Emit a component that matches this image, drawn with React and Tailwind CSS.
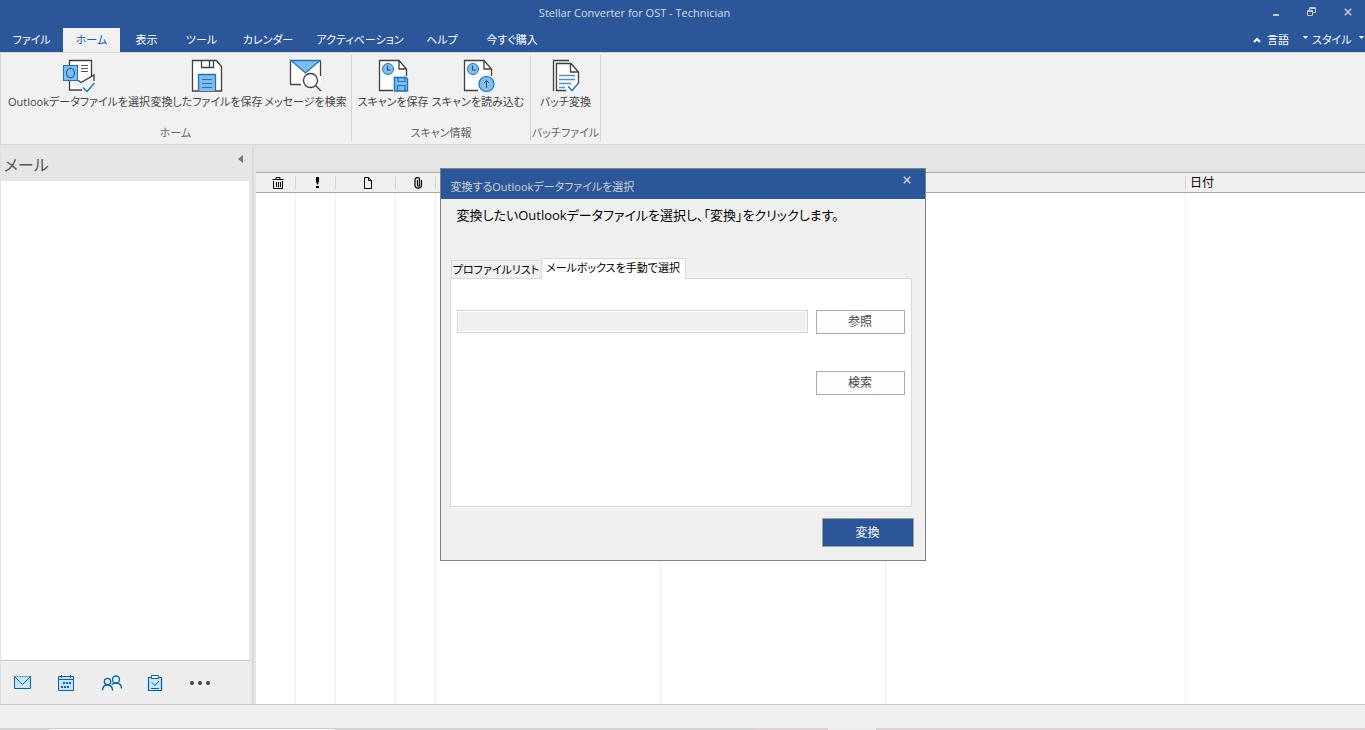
import { useState } from "react";

const MENU_TABS = [
    { label: "ファイル", width: "w-[63px]" },
    { label: "ホーム", width: "w-[57px]" },
    { label: "表示", width: "w-[53px]" },
    { label: "ツール", width: "w-[57px]" },
    { label: "カレンダー", width: "w-[76px]" },
    { label: "アクティベーション", width: "w-[108px]" },
    { label: "ヘルプ", width: "w-[56px]" },
    { label: "今すぐ購入", width: "w-[84px]" }
];

// Ribbon icons
const DataFileIcon = () => (
    <svg width="34" height="34" viewBox="0 0 34 34" fill="none">
        <path d="M7.500 5.500v-4h22V17L18 23l-2-2.500M7.500 22.500v8.500H20" fill="#fff" />
        <path d="M7.500 6V1.500h22V17M7.500 22v9H20" stroke="#404040" strokeWidth="1.3" />
        <path d="M15.500 21l3.500 2.500L32 16v6" stroke="#404040" strokeWidth="1.3" />
        <path d="M19 6.500h7M19 9.500h7M19 12.500h7" stroke="#555" />
        <rect x="1.500" y="6.500" width="14" height="15" fill="#83bdec" stroke="#1a73bd" />
        <ellipse cx="8.500" cy="14" rx="4" ry="4.800" stroke="#1a73bd" strokeWidth="1.4" />
        <path d="M21 28.500l4 4 7.500-8.500" stroke="#1a73bd" strokeWidth="1.4" />
    </svg>
);

const SaveFileIcon = () => (
    <svg width="34" height="34" viewBox="0 0 34 34" fill="none">
        <path d="M2.500 1.500h24l5 6v24.500h-29z" fill="#fff" stroke="#404040" strokeWidth="1.3" />
        <path d="M11.500 1.500v7h12v-7M19.500 2v6" stroke="#404040" strokeWidth="1.3" />
        <path d="M8.500 32V15.500h17V32" fill="#83bdec" stroke="#1a73bd" strokeWidth="1.3" />
        <path d="M12 20.500h10M12 24.500h10M12 28.500h10" stroke="#1a73bd" />
    </svg>
);

const SearchMailIcon = () => (
    <svg width="34" height="34" viewBox="0 0 34 34" fill="none">
        <path d="M1.500 1.500h30v24.500h-30z" fill="#fff" />
        <path d="M12 25.500H1.500v-24M31.500 2v15" stroke="#404040" strokeWidth="1.3" />
        <path d="M2 1.500h29L16.500 14z" fill="#83bdec" stroke="#1a73bd" strokeWidth="1.3" />
        <circle cx="21.500" cy="21.500" r="8.500" fill="#f1f1f1" />
        <circle cx="21.500" cy="21.500" r="7" fill="#fff" stroke="#404040" strokeWidth="1.3" />
        <path d="M26.500 26.500l5.500 5.500" stroke="#404040" strokeWidth="1.3" />
    </svg>
);

const ScanPage = () => (
    <>
        <path d="M3.500 1.500h20l7 8V32h-27z" fill="#fff" />
        <path d="M17 31.500H3.500v-30H23l7.500 8.500v7M23 1.500V10h7.500" stroke="#404040" strokeWidth="1.3" />
        <circle cx="12" cy="10" r="5.500" fill="#83bdec" stroke="#1a73bd" />
        <path d="M11.500 6.500v4.500H15" stroke="#0f5c9e" strokeWidth="1.2" />
    </>
);

const ScanSaveIcon = () => (
    <svg width="34" height="34" viewBox="0 0 34 34" fill="none">
        <ScanPage />
        <path d="M17 17h17v17H17z" fill="#f1f1f1" />
        <path d="M18.500 18.500h11.500l1.500 1.500v12h-13z" fill="#83bdec" stroke="#1a73bd" strokeWidth="1.4" />
        <path d="M22 18.500v4h7v-4M21.500 32v-5.500h7.500V32" stroke="#1a73bd" strokeWidth="1.2" />
    </svg>
);

const ScanLoadIcon = () => (
    <svg width="34" height="34" viewBox="0 0 34 34" fill="none">
        <ScanPage />
        <circle cx="25.500" cy="25" r="8.500" fill="#f1f1f1" />
        <circle cx="25.500" cy="25" r="7.500" fill="#83bdec" stroke="#1a73bd" strokeWidth="1.2" />
        <path d="M25.500 29v-7.500M23 24l2.500-2.500L28 24" stroke="#0f5c9e" />
    </svg>
);

const BatchIcon = () => (
    <svg width="34" height="34" viewBox="0 0 34 34" fill="none">
        <path d="M4.500 32V1.500H20" stroke="#404040" strokeWidth="1.3" />
        <path d="M7.500 32V4.500h15l7 8V25L21 32z" fill="#fff" />
        <path d="M17 31.500H7.500v-27H22l7.500 8.500v11M21.500 4.500V13h8" stroke="#404040" strokeWidth="1.3" />
        <path d="M10 16.500h16M10 20.500h16M10 24.500h12M10 28.500h6" stroke="#4d94d1" strokeWidth="1.3" />
        <path d="M19 27.500l4 4 7-8" stroke="#1a73bd" strokeWidth="1.4" />
    </svg>
);

const RIBBON_GROUPS = [
    {
        title: "ホーム",
        className: "w-[351px] pl-2",
        items: [
            { label: "Outlookデータファイルを選択", icon: DataFileIcon, width: "w-[142px]" },
            { label: "変換したファイルを保存", icon: SaveFileIcon, width: "w-[113px]" },
            { label: "メッセージを検索", icon: SearchMailIcon, width: "w-[85px]" }
        ]
    },
    {
        title: "スキャン情報",
        className: "w-[178px] pl-1",
        items: [
            { label: "スキャンを保存", icon: ScanSaveIcon, width: "w-[74px]" },
            { label: "スキャンを読み込む", icon: ScanLoadIcon, width: "w-[96px]" }
        ]
    },
    {
        title: "バッチファイル",
        className: "w-[69px]",
        items: [{ label: "バッチ変換", icon: BatchIcon, width: "w-[69px]" }]
    }
];

const CloseIcon = ({ size = 10 }) => (
    <svg width={size} height={size} viewBox="0 0 8 8" stroke="currentColor" strokeWidth="1.6">
        <path d="M.8.8l6.400 6.400M7.200.8L.8 7.200" />
    </svg>
);

function TitleBar() {
    return (
        <div className="relative flex h-7 items-center justify-center pb-[2px] text-[#d5deeb]">
            <h1 className="pr-24">Stellar Converter for OST - Technician</h1>
            <div className="absolute top-0 right-0 flex h-6">
                <button aria-label="最小化" className="flex w-9 items-center justify-center">
                    <svg width="8" height="8"><path d="M1 6h6v2H1z" fill="#c8c8c8" /></svg>
                </button>
                <button aria-label="元に戻す" className="flex w-9 items-center justify-center">
                    <svg width="10" height="10" fill="none" stroke="#c8c8c8">
                        <path d="M2.500 3V.5h6v5H6M2.500 1.500h6M.5 3.500h5v5h-5zM.5 4.500h5" />
                    </svg>
                </button>
                <button aria-label="閉じる" className="flex w-[35px] items-center justify-center text-[#c8c8c8]">
                    <CloseIcon size={8} />
                </button>
            </div>
        </div>
    );
}

function MenuBar() {
    return (
        <div className="flex h-6 justify-between text-white">
            <nav className="flex">
                {MENU_TABS.map((tab) => (
                    <button
                        key={tab.label}
                        className={`${tab.width} whitespace-nowrap ${tab.label === "ホーム" ? "bg-[#f1f1f1] text-[#0f62b8]" : ""}`}
                    >
                        {tab.label}
                    </button>
                ))}
            </nav>
            <div className="flex items-center">
                <button aria-label="リボンを折りたたむ" className="flex w-5 justify-center">
                    <svg width="8" height="6" fill="none" stroke="#fff" strokeWidth="2"><path d="M1 5l3-3 3 3" /></svg>
                </button>
                <button className="flex w-[45px] items-center justify-between whitespace-nowrap">
                    言語
                    <svg width="5" height="4" fill="#fff" className="mr-1 mb-1"><path d="M0 0h5L2.500 3z" /></svg>
                </button>
                <button className="flex w-[53px] items-center justify-between whitespace-nowrap">
                    スタイル
                    <svg width="5" height="4" fill="#fff" className="mr-px mb-1"><path d="M0 0h5L2.500 3z" /></svg>
                </button>
            </div>
        </div>
    );
}

function Ribbon() {
    return (
        <div className="flex h-[93px] border-t border-b border-l border-[#d4d4d4] bg-[#f1f1f1] pt-[2px] pb-[3px] text-[#444]">
            {RIBBON_GROUPS.map((group) => (
                <section key={group.title} className="flex flex-col justify-between border-r border-[#d4d4d4] first:-ml-px">
                    <div className={`flex ${group.className}`}>
                        {group.items.map(({ label, icon: Icon, width }) => (
                            <button key={label} className={`${width} flex flex-col items-center pt-1 whitespace-nowrap`}>
                                <Icon />
                                <span className="pt-px leading-4">{label}</span>
                            </button>
                        ))}
                    </div>
                    <h2 className="text-center leading-4 text-[#666]">{group.title}</h2>
                </section>
            ))}
        </div>
    );
}

function Sidebar() {
    return (
        <aside className="flex w-[250px] shrink-0 flex-col border-l border-[#e0e0e0] bg-[#e6e6e6]">
            <div className="flex h-9 justify-between pl-[3px]">
                <h2 className="pt-2 text-base text-[#555]">メール</h2>
                <button aria-label="折りたたむ" className="mt-2 mr-[7px] h-3">
                    <svg width="5" height="8" fill="#777"><path d="M5 0v8L0 4z" /></svg>
                </button>
            </div>
            <div className="mr-px flex-1 bg-white" />
            <nav className="flex h-11 items-center border-t border-[#c8c8c8] bg-[#eee] pl-3 text-[#0063b1]">
                <button aria-label="メール" className="w-11">
                    <svg width="20" height="18" fill="#cce4f7" stroke="currentColor">
                        <path d="M1.500 2.500h16v12h-16z" />
                        <path d="M1.500 2.500l8 8 8-8" />
                    </svg>
                </button>
                <button aria-label="カレンダー" className="w-11">
                    <svg width="20" height="18" fill="#cce4f7" stroke="currentColor">
                        <path d="M1.500 2.500h15v14h-15zM1.500 5.500h15M4.500 1v3M13.500 1v3" />
                        <path d="M6 9h2m1 0h2m1 0h2M4 13h2m1 0h2m1 0h2" strokeWidth="2" />
                    </svg>
                </button>
                <button aria-label="連絡先" className="w-[45px]">
                    <svg width="22" height="18" fill="none" stroke="currentColor" strokeWidth="1.300">
                        <circle cx="6.500" cy="7.500" r="3.200" />
                        <circle cx="15" cy="5.500" r="3.500" />
                        <path d="M1.500 16.500c0-3.500 2-5.500 5-5.500s5 2 5 5.500M11 10.500c1-1 2.500-1.500 4-1.500 3.500 0 5.500 2 5.500 5.500" />
                    </svg>
                </button>
                <button aria-label="タスク" className="w-[42px]">
                    <svg width="18" height="18" fill="#cce4f7" stroke="currentColor">
                        <path d="M2.500 3.500h13v13h-13z" strokeWidth="1.200" />
                        <path d="M5.500 1.500h7v3h-7z" fill="#fff" />
                        <path d="M6 8.500l3 3 4-4.500M5 14.500h8" fill="none" />
                    </svg>
                </button>
                <button aria-label="その他" className="w-8">
                    <svg width="24" height="18" fill="#444">
                        <circle cx="4" cy="9" r="2" />
                        <circle cx="12" cy="9" r="2" />
                        <circle cx="20" cy="9" r="2" />
                    </svg>
                </button>
            </nav>
        </aside>
    );
}

const COLUMNS = [
    {
        key: "deleted",
        width: "w-10",
        icon: (
            <svg width="12" height="12" fill="none" stroke="#000">
                <path d="M.5 2.500h11M4 2V.5h4V2M1.500 4v7.500h9V4M4.500 5v5M6.500 5v5M8.500 5v5" />
            </svg>
        )
    },
    {
        key: "importance",
        width: "w-10",
        icon: <svg width="5" height="12"><path d="M1 0h3v4L3 7.500H2L1 4zM1 9h3v2H1z" /></svg>
    },
    {
        key: "type",
        width: "w-[60px]",
        icon: (
            <svg width="10" height="12" fill="none" stroke="#000">
                <path d="M1.500.5h4l3 3v8h-7zM5.500.5v3h3" />
            </svg>
        )
    },
    {
        key: "attachment",
        width: "w-10",
        icon: (
            <svg width="12" height="12" fill="none" stroke="#000" strokeWidth="1.200">
                <path d="M5.500 3v5c0 1.500 2 1.500 2 0V2c0-2-4.500-2-4.500 1v5.500C3 12 9.500 12 9.500 8V3" />
            </svg>
        )
    },
    { key: "from", width: "w-[225px]" },
    { key: "to", width: "w-[225px]" },
    { key: "subject", width: "w-[300px]" },
    { key: "date", width: "w-auto", label: "日付" }
];

function MessageList() {
    return (
        <main className="flex min-w-0 flex-1 flex-col bg-[#e5e5e5] pt-[27px]">
            <table className="w-full flex-1 table-fixed border-collapse bg-white">
                <thead className="bg-[#f0f0f0]">
                    <tr className="h-5 border-y border-[#a8a8a8]">
                        {COLUMNS.map((col) => (
                            <th key={col.key} className={`${col.width} group p-0 font-normal`}>
                                <div className="flex h-[13px] items-center justify-center border-r border-[#d4d4d4] pl-1 group-last:border-r-0">
                                    {col.icon}
                                    {col.label && <span className="w-full text-left text-xs">{col.label}</span>}
                                </div>
                            </th>
                        ))}
                    </tr>
                </thead>
                <tbody>
                    <tr>
                        {COLUMNS.map((col) => (
                            <td key={col.key} className="group h-[510px] p-0">
                                <div className="h-full border-r border-[#eee] group-last:border-r-0" />
                            </td>
                        ))}
                    </tr>
                </tbody>
            </table>
        </main>
    );
}

function SelectFileDialog({ onClose }) {
    const [tab, setTab] = useState("manual");
    const secondaryButton = "h-6 w-[89px] border border-[#ababab] bg-[#fdfdfd] text-xs text-[#444]";

    return (
        <div
            role="dialog"
            aria-labelledby="dialog-title"
            className="absolute inset-x-0 top-[168px] mx-auto w-[486px] border border-[#808080] bg-[#f0f0f0] text-black"
        >
            <div className="flex h-[30px] items-start justify-between bg-[#2b579a] pl-[10px] text-[#d0d0d0]">
                <h2 id="dialog-title" className="pt-[10px] leading-4">変換するOutlookデータファイルを選択</h2>
                <button aria-label="閉じる" onClick={onClose} className="mt-[7px] mr-[14px]">
                    <CloseIcon size={8} />
                </button>
            </div>
            <div className="px-[9px] pb-[13px]">
                <p className="pt-1 pl-[7px] text-[13px] leading-6 whitespace-nowrap">
                    変換したいOutlookデータファイルを選択し、「変換」をクリックします。
                </p>
                <div role="tablist" className="mt-[31px] flex items-end pl-px">
                    <button
                        role="tab"
                        aria-selected={tab === "profile"}
                        onClick={() => setTab("profile")}
                        className="h-[18px] w-[90px] border-t border-l border-[#d9d9d9] leading-4 whitespace-nowrap"
                    >
                        プロファイルリスト
                    </button>
                    <button
                        role="tab"
                        aria-selected={tab === "manual"}
                        onClick={() => setTab("manual")}
                        className="z-10 -mb-px h-[21px] w-[145px] border border-b-0 border-[#d9d9d9] bg-white pb-[2px] leading-4 whitespace-nowrap"
                    >
                        メールボックスを手動で選択
                    </button>
                </div>
                <div role="tabpanel" className="mr-1 h-[229px] border border-[#d9d9d9] bg-white px-[6px] pt-[31px]">
                    <div className="flex items-start gap-2">
                        <input
                            type="text"
                            readOnly
                            aria-label="Outlookデータファイル"
                            className="h-[23px] min-w-0 flex-1 border border-[#d4d4d4] bg-[#f0f0f0] shadow-[inset_0_0_0_1px_white] outline-none"
                        />
                        <button className={secondaryButton}>参照</button>
                    </div>
                    <div className="mt-[37px] flex justify-end">
                        <button className={secondaryButton}>検索</button>
                    </div>
                </div>
                <div className="mt-[11px] mr-[2px] flex justify-end">
                    <button className="h-[29px] w-[92px] border border-[#a0a0a0] bg-[#2b579a] text-xs text-white">変換</button>
                </div>
            </div>
        </div>
    );
}

export default function App() {
    const [dialogOpen, setDialogOpen] = useState(true);

    return (
        <div className="relative flex min-h-screen flex-col overflow-hidden bg-[#f0f0f0] font-['Open_Sans','Noto_Sans_CJK_JP',sans-serif] text-[11px] [font-feature-settings:'palt']">
            <header className="bg-[#2b579a]">
                <TitleBar />
                <MenuBar />
            </header>
            <Ribbon />

            <div className="flex flex-1 border-b border-[#c8c8c8]">
                <Sidebar />
                <div className="w-[6px] border-x-2 border-[#e6e6e6] bg-[#dadada]" />
                <MessageList />
            </div>

            <footer className="h-[23px] bg-[#f0f0f0]" />
            <div className="flex h-[2px] bg-[#d4d4d4]">
                <div className="ml-[49px] w-[286px] border-t border-[#c8c8c8] bg-white" />
                <div className="ml-[420px] w-[73px] bg-[#e0d0d2]" />
                <div className="w-12 bg-[#f0eded]" />
                <div className="flex-1 bg-[#e0d0d2]" />
            </div>

            {dialogOpen && <SelectFileDialog onClose={() => setDialogOpen(false)} />}
        </div>
    );
}
